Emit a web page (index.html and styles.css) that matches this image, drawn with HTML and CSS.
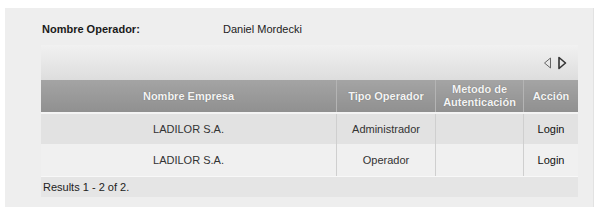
FILE: index.html
```html
<!DOCTYPE html>
<html>
<head>
<meta charset="utf-8">
<link rel="stylesheet" href="styles.css">
</head>
<body>
<div class="panel">
  <div class="operator">
    <span class="op-label">Nombre Operador:</span>
    <span class="op-value">Daniel Mordecki</span>
  </div>
  <div class="grid">
    <div class="toolbar">
      <svg class="nav" width="26" height="14" viewBox="0 0 26 14">
        <path d="M8.5 2 L2.5 7 L8.5 12 Z" fill="none" stroke="#666" stroke-width="1"/>
        <path d="M17 1.5 L23.5 7 L17 12.5 Z" fill="none" stroke="#333" stroke-width="1.6" stroke-linejoin="round"/>
      </svg>
    </div>
    <table class="tbl">
      <thead>
        <tr>
          <th class="c1">Nombre Empresa</th>
          <th class="c2">Tipo Operador</th>
          <th class="c3">Metodo de<br>Autenticación</th>
          <th class="c4">Acción</th>
        </tr>
      </thead>
      <tbody>
        <tr class="odd">
          <td>LADILOR S.A.</td>
          <td>Administrador</td>
          <td></td>
          <td class="act">Login</td>
        </tr>
        <tr class="even">
          <td>LADILOR S.A.</td>
          <td>Operador</td>
          <td></td>
          <td class="act">Login</td>
        </tr>
      </tbody>
    </table>
    <div class="results">Results 1 - 2 of 2.</div>
  </div>
</div>
</body>
</html>
```
FILE: styles.css
```css
html, body {
  margin: 0;
  padding: 0;
  background: #ffffff;
}
body {
  font-family: "Liberation Sans", Arial, sans-serif;
  font-size: 11px;
  color: #222;
}
.panel {
  margin: 8px 0 0 5px;
  width: 589px;
  height: 199px;
  box-sizing: border-box;
  background: #eeeeee;
  border-right: 1px solid #e2e2e2;
  padding: 14px 15px 0 36px;
}
.operator {
  display: flex;
  height: 14px;
  line-height: 14px;
  font-size: 11px;
}
.op-label {
  font-weight: bold;
  width: 181px;
  padding-left: 1px;
  color: #1a1a1a;
}
.op-value {
  color: #222;
}
.grid {
  margin-top: 9px;
}
.toolbar {
  height: 35px;
  background: linear-gradient(#f1f1f1, #dddddd);
  display: flex;
  justify-content: flex-end;
  align-items: center;
  padding-right: 10px;
  padding-top: 1px;
  box-sizing: border-box;
}
.nav {
  display: block;
}
.tbl {
  width: 100%;
  border-collapse: collapse;
  table-layout: fixed;
}
.tbl th {
  height: 32px;
  padding: 0;
  background: linear-gradient(#a4a4a4, #909090);
  color: #f4f4f4;
  font-weight: bold;
  font-size: 11px;
  line-height: 13px;
  text-shadow: 0 0 1px #666;
  border-left: 1px solid #b4b4b4;
  border-bottom: 2px solid #f4f4f4;
  text-align: center;
}
.tbl th:first-child { border-left: none; }
.c1 { width: 295px; }
.c2 { width: 98px; }
.c3 { width: 87px; }
.c4 { width: auto; }
.tbl td {
  height: 30px;
  padding: 0;
  text-align: center;
  color: #333;
  border-left: 1px solid #cfcfcf;
  font-size: 11px;
}
.tbl td:first-child { border-left: none; }
.tbl tr.odd td { background: #e2e2e2; }
.tbl tr.even td {
  background: #f0f0f0;
  height: 32px;
  border-bottom: 1px solid #f8f8f8;
}
.tbl td.act { color: #111; }
.results {
  height: 20px;
  line-height: 20px;
  background: #e5e5e5;
  padding-left: 2px;
  color: #222;
}
```
